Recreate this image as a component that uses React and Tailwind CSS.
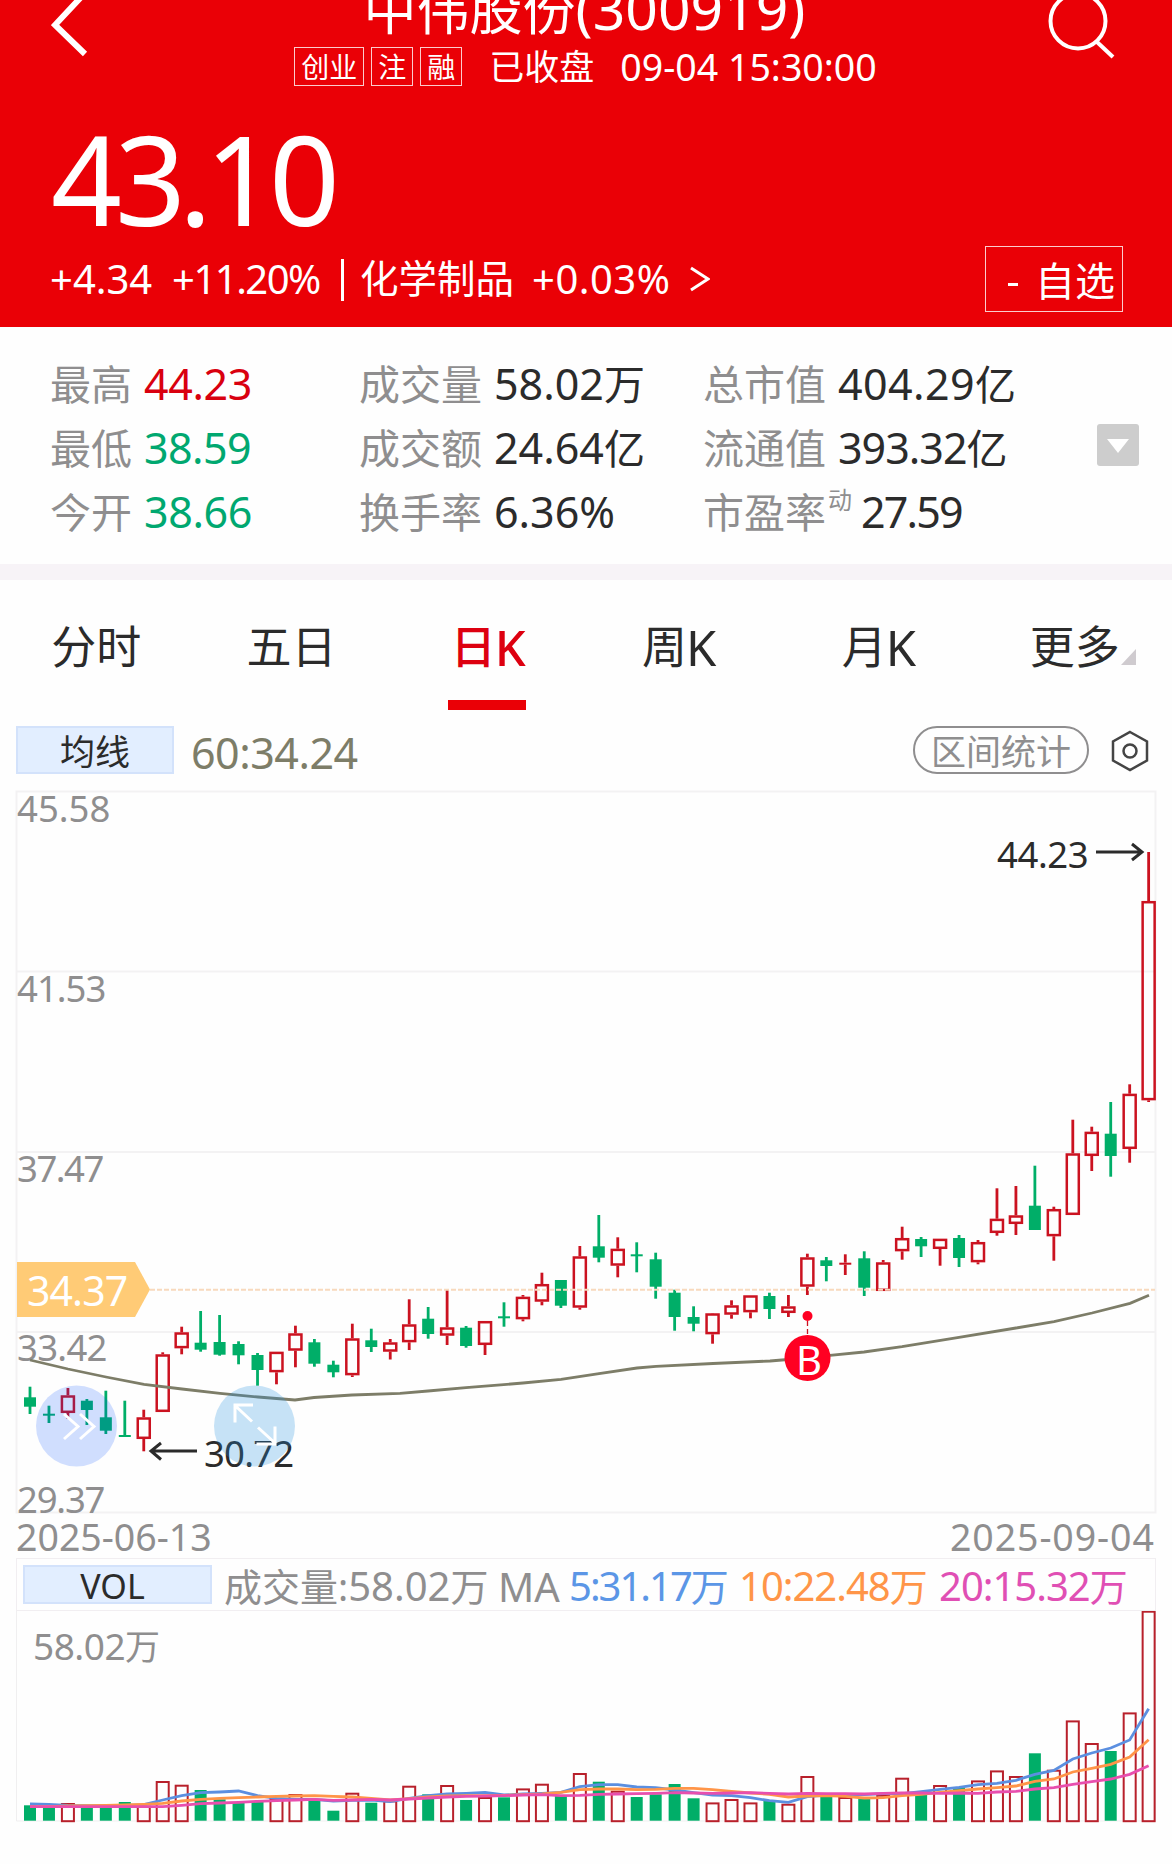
const FONT = "font-['Noto_Sans','Noto_Sans_CJK_SC',sans-serif]";

// [up, high, body top, body bottom, low, volume bar top]
const DAYS = [
  [0, 1386.7, 1397.3, 1406.7, 1414, 1805.3],
  [0, 1405.7, 1413.7, 1415.7, 1423, 1808],
  [1, 1388, 1395.3, 1413, 1419, 1803.3],
  [0, 1399, 1400.7, 1410, 1425, 1806.7],
  [0, 1390.7, 1417.3, 1430.7, 1434, 1805.3],
  [0, 1400.7, 1435, 1437, 1437, 1802],
  [1, 1409.7, 1417.3, 1439, 1451.3, 1806],
  [1, 1352.3, 1354.3, 1412, 1412, 1781.3],
  [1, 1326.7, 1332.3, 1348.3, 1354.3, 1785],
  [0, 1311, 1342.7, 1349.7, 1351.7, 1790],
  [0, 1315, 1342, 1354.7, 1355.7, 1799.3],
  [0, 1341.3, 1344, 1355.3, 1364.3, 1802.7],
  [0, 1353, 1355, 1370, 1385.7, 1802],
  [1, 1351.7, 1351.7, 1372.3, 1384.3, 1798.3],
  [1, 1325.7, 1333.3, 1350.7, 1367.3, 1794.3],
  [0, 1339, 1342.3, 1363.7, 1366.7, 1800.7],
  [0, 1360.7, 1364.7, 1372.3, 1377.3, 1810.7],
  [1, 1323.7, 1338.3, 1375.3, 1377, 1793],
  [0, 1328.7, 1340.3, 1347, 1352, 1802.7],
  [1, 1339, 1342.3, 1351.7, 1359.5, 1800.7],
  [1, 1299.3, 1324.3, 1342.3, 1350, 1786],
  [0, 1307, 1318.7, 1334, 1338.7, 1794.3],
  [1, 1290, 1327.3, 1335.7, 1345, 1785.3],
  [0, 1326, 1327.7, 1346, 1347.7, 1800],
  [1, 1321, 1321, 1345, 1355, 1797.3],
  [0, 1302.3, 1316.3, 1318.3, 1326.7, 1797.3],
  [1, 1295, 1296.7, 1319.3, 1321.3, 1788.7],
  [1, 1272.7, 1284, 1301.7, 1305.3, 1784],
  [0, 1280, 1280, 1305.7, 1308, 1796],
  [1, 1246, 1256.3, 1307.7, 1309.7, 1773.3],
  [0, 1215, 1246.3, 1257.7, 1262.3, 1781.7],
  [1, 1237.3, 1248.7, 1265.7, 1277.3, 1791],
  [0, 1242.3, 1254.3, 1256.3, 1272.3, 1797],
  [0, 1252.7, 1259.3, 1286.7, 1298.7, 1794.3],
  [0, 1289.7, 1292.7, 1317, 1330.7, 1784],
  [0, 1306.3, 1317, 1323.7, 1331.3, 1798.3],
  [1, 1313, 1313.3, 1334.3, 1343.7, 1802.7],
  [1, 1300.3, 1305.3, 1314.7, 1318.7, 1799.3],
  [1, 1295.3, 1295.3, 1312.3, 1318.3, 1802.7],
  [0, 1292.7, 1296, 1309, 1319, 1801],
  [1, 1295, 1306.3, 1313, 1317, 1804],
  [1, 1253.7, 1257.3, 1286.7, 1295, 1776.3],
  [0, 1257, 1260.3, 1266, 1281.3, 1797],
  [1, 1254.3, 1262.7, 1264.7, 1275, 1797.3],
  [0, 1251.3, 1258.3, 1287.7, 1296, 1798],
  [1, 1260, 1262.3, 1291, 1291, 1795],
  [1, 1226.7, 1238, 1251.3, 1259.7, 1778],
  [0, 1237, 1239, 1246.3, 1257, 1794.3],
  [1, 1238.7, 1238.7, 1249, 1265.7, 1785.3],
  [0, 1235, 1238, 1258, 1267, 1787.7],
  [1, 1240, 1242, 1262.3, 1264.3, 1780.7],
  [1, 1188.3, 1218.7, 1233, 1235.7, 1770.7],
  [1, 1186, 1215.3, 1224, 1235, 1776.3],
  [0, 1165.7, 1205.7, 1230, 1230, 1753.3],
  [1, 1206.7, 1209, 1236.3, 1260.7, 1770],
  [1, 1119.7, 1153.3, 1215, 1215, 1720.7],
  [1, 1126.7, 1131.7, 1156, 1171, 1743.3],
  [0, 1102, 1133.7, 1156, 1176.7, 1751],
  [1, 1084.3, 1093.7, 1149, 1162.7, 1712.7],
  [1, 852, 901, 1100.3, 1102, 1611],
];

const MA60 =
  '30,1360 68,1369 106,1377 144,1384.3 182,1389 220,1393.3 258,1397 295,1400 314,1397.5 352,1395 400,1393.3 428,1391 466,1387.7 523,1383 561,1379.3 599,1373.7 637,1368 656,1366.3 713,1363.5 770,1361 788,1359.5 830,1355.3 864,1352 902,1346.7 959,1337.3 1016,1328 1054,1321.7 1092,1313 1130,1303.3 1149,1295.3';

// volume averages, in thirds of a pixel below y = 1550
const VOL_MA = [
  ['#5b8fe0', [762, 763, 766, 767, 768, 766, 764, 750, 737, 728, 726, 723, 737, 745, 748, 748, 753, 751, 750, 755, 745, 737, 732, 730, 727, 735, 732, 730, 727, 710, 704, 704, 711, 713, 720, 728, 735, 737, 743, 752, 757, 740, 735, 733, 734, 731, 731, 725, 718, 712, 704, 700, 691, 673, 661, 627, 609, 594, 570, 476]],
  ['#ff9548', [770, 770, 768, 767, 766, 765, 763, 760, 753, 748, 745, 743, 741, 739, 738, 737, 739, 741, 745, 750, 746, 741, 738, 737, 737, 736, 734, 732, 727, 719, 717, 717, 719, 718, 715, 715, 719, 724, 729, 733, 741, 738, 737, 739, 744, 743, 737, 733, 727, 722, 717, 713, 708, 694, 687, 666, 655, 643, 621, 569]],
  ['#e84fae', [770, 770, 770, 770, 770, 770, 770, 770, 766, 761, 759, 757, 754, 752, 750, 748, 751, 750, 748, 750, 747, 744, 741, 739, 738, 737, 735, 734, 737, 736, 733, 732, 731, 730, 728, 729, 730, 729, 728, 730, 732, 730, 731, 731, 732, 730, 729, 729, 730, 729, 730, 726, 724, 717, 713, 703, 695, 687, 673, 647]],
];

const dayX = (i) => 30 + i * 18.96;

const STATS = [
  [
    { label: '最高', value: '44.23', color: 'text-[#d9000f]', spacing: 'tracking-[-0.4px]' },
    { label: '最低', value: '38.59', color: 'text-[#00a870]', spacing: 'tracking-[-0.6px]' },
    { label: '今开', value: '38.66', color: 'text-[#00a870]', spacing: 'tracking-[-0.4px]' },
  ],
  [
    { label: '成交量', value: '58.02', unit: '万' },
    { label: '成交额', value: '24.64', unit: '亿' },
    { label: '换手率', value: '6.36%' },
  ],
  [
    { label: '总市值', value: '404.29', unit: '亿', spacing: 'tracking-[0.4px]' },
    { label: '流通值', value: '393.32', unit: '亿', spacing: 'tracking-[-1px]' },
    { label: '市盈率', sup: '动', value: '27.59', spacing: 'tracking-[-1.8px]' },
  ],
];

const TABS = ['分时', '五日', '日K', '周K', '月K', '更多'];

function Badge({ children }) {
  return (
    <span className="flex h-[39px] items-center border border-white/80 px-[6px] text-[28px] leading-none">
      {children}
    </span>
  );
}

function Header() {
  return (
    <header className="h-[327px] overflow-hidden bg-[#ea0006] text-white">
      <div className="flex h-[92px] items-start justify-between pl-[51px] pr-[54px]">
        <svg className="h-[60px] w-[70px]" viewBox="0 0 70 60" fill="none" stroke="currentColor" strokeWidth="6">
          <path d="M33 -6 L4 25 L34 54" />
        </svg>
        <div className="flex flex-col items-center">
          <h1 className="-mt-[28px] whitespace-nowrap text-[53px] leading-[72px]">
            中伟股份<span className="text-[57px]">(300919)</span>
          </h1>
          <div className="ml-[2px] mt-px flex items-center gap-[7px]">
            <Badge>创业</Badge>
            <Badge>注</Badge>
            <Badge>融</Badge>
            <span className="ml-[20px] whitespace-nowrap text-[35px] leading-[39px]">已收盘</span>
            <span className="ml-[19px] whitespace-nowrap text-[37.5px] leading-[37px]">09-04 15:30:00</span>
          </div>
        </div>
        <svg className="h-[60px] w-[70px]" viewBox="0 0 70 60" fill="none" stroke="currentColor" strokeWidth="4">
          <circle cx="30" cy="21" r="27.5" />
          <path d="M49 42 L65 57" />
        </svg>
      </div>

      <div className="mt-[16px] h-[140px] pl-[51px] text-[124px] leading-[140px] tracking-[-7px]">43.10</div>

      <div className="-mt-[2px] flex h-[66px] items-center pl-[50px] pr-[49px] text-[40px]">
        <span className="w-[122px] leading-[66px]">+4.34</span>
        <span className="w-[169px] tracking-[-1.5px]">+11.20%</span>
        <span className="mt-[2px] h-[42px] w-[3px] bg-white" />
        <span className="ml-[16px] w-[172px] whitespace-nowrap text-[38.5px]">化学制品</span>
        <span className="w-[158px] tracking-[0.5px]">+0.03%</span>
        <svg className="h-[26px] w-[20px]" viewBox="0 0 20 26" fill="none" stroke="currentColor" strokeWidth="3">
          <path d="M1 2 L18 13 L1 24" />
        </svg>
        <span className="ml-auto flex h-[66px] w-[138px] items-center justify-between border border-white/80 pl-[22px] pr-[7px]">
          <span className="mt-[10px] h-[3px] w-[10px] bg-white" />
          <span className="mt-[4px] text-[40px] leading-none">自选</span>
        </span>
      </div>
    </header>
  );
}

function Stat({ label, sup, value, unit, color = 'text-[#2b2b2b]', spacing = '' }) {
  return (
    <div className="flex h-[64px] items-center whitespace-nowrap text-[41px] leading-[64px]">
      <span className="text-[#8f8e8f]">{label}</span>
      {sup && <span className="ml-[2px] -mt-[24px] text-[24px] text-[#8f8e8f]">{sup}</span>}
      <span className={`text-[43px] ${sup ? 'ml-[9px]' : 'ml-[12px]'} ${color} ${spacing}`}>{value}</span>
      <span className={color}>{unit}</span>
    </div>
  );
}

function Stats() {
  return (
    <section className="flex h-[237px] pl-[50px] pt-[25px]">
      {STATS.map((col, i) => (
        <div key={i} className={i === 0 ? 'w-[309px]' : i === 1 ? 'w-[344px]' : 'w-[394px]'}>
          {col.map((s) => (
            <Stat key={s.label} {...s} />
          ))}
        </div>
      ))}
      <div className="mt-[72px] flex h-[42px] w-[42px] items-center justify-center rounded-[3px] bg-[#cdcdcd]">
        <svg className="mt-[2px] h-[14px] w-[22px]" viewBox="0 0 22 14" fill="#fff">
          <path d="M0 0 H22 L11 14 Z" />
        </svg>
      </div>
    </section>
  );
}

function Tabs() {
  return (
    <nav className="grid h-[146px] grid-cols-6 border-t-[16px] border-[#f7f3f7] text-[45px] text-[#2b2b2b]">
      {TABS.map((tab) => (
        <div
          key={tab}
          className={`flex flex-col items-center ${tab === '日K' ? 'font-medium text-[#dd0010]' : ''}`}
        >
          <span className={`mt-[34px] flex items-end leading-[66px] ${tab === '周K' ? '-ml-[9px]' : tab === '分时' || tab === '五日' ? '-ml-[3px]' : ''}`}>
            {tab.endsWith('K') ? (
              <>
                {tab[0]}
                <span className="-ml-px text-[49px]">K</span>
              </>
            ) : (
              <span className={tab === '更多' ? 'ml-[17px]' : ''}>{tab}</span>
            )}
            {tab === '更多' && (
              <svg className="mb-[15px] ml-px h-[16px] w-[15px]" viewBox="0 0 15 16" fill="#cfcbcf">
                <path d="M15 0 V16 H0 Z" />
              </svg>
            )}
          </span>
          {tab === '日K' && <span className="-ml-[2px] mt-[20px] h-[10px] w-[78px] bg-[#ea0006]" />}
        </div>
      ))}
    </nav>
  );
}

function Toolbar() {
  return (
    <div className="flex h-[48px] items-center pl-[16px] pr-[22px]">
      <span className="flex h-[48px] w-[158px] items-center justify-center border-2 border-[#d3e2fb] bg-[#e2eeff] pt-[3px] text-[35px] leading-none text-[#2b2b2b]">
        均线
      </span>
      <span className="ml-[17px] mt-[6px] text-[43px] leading-[48px] tracking-[-0.5px] text-[#7d7d68]">60:34.24</span>
      <span className="ml-auto flex h-[48px] w-[176px] items-center justify-center rounded-full border-2 border-[#8f8e8f] pt-[3px] text-[35px] leading-none text-[#8f8e8f]">
        区间统计
      </span>
      <svg className="ml-[21px] mt-[2px] h-[44px] w-[40px]" viewBox="0 0 40 44" fill="none" stroke="#444" strokeWidth="2.5">
        <path d="M20 3 L37 12.5 V31.5 L20 41 L3 31.5 V12.5 Z" />
        <circle cx="20" cy="22" r="6.5" />
      </svg>
    </div>
  );
}

function Candle({ x, day }) {
  const [up, high, top, bottom, low] = day;
  const height = bottom - top;
  const color = up ? '#cb1220' : '#00ae68';
  return (
    <g fill={color}>
      <rect x={x - 1.4} y={high} width="2.8" height={up ? top - high : low - high} />
      {up ? <rect x={x - 1.4} y={bottom} width="2.8" height={low - bottom} /> : null}
      {up && height > 3 ? (
        <rect x={x - 6} y={top + 1.2} width="12" height={height - 2.4} fill="none" stroke={color} strokeWidth="2.5" />
      ) : (
        <rect x={x - 6} y={top} width="12" height={height} />
      )}
    </g>
  );
}

function KLine() {
  return (
    <svg className="block h-[783px] w-[1172px]" viewBox="0 774 1172 783" fill="none">
      <g stroke="#f3f2f3" strokeWidth="2">
        <rect x="16.5" y="791.5" width="1139" height="721" />
        <path d="M16 971.5 H1155 M16 1152 H1155 M16 1332 H1155" />
      </g>
      <g fill="#8f8e8f" fontSize="36.5">
        <text x="17" y="821.5">45.58</text>
        <text x="17" y="1001.5" letterSpacing="-1">41.53</text>
        <text x="17" y="1181.5" letterSpacing="-1.5">37.47</text>
        <text x="17" y="1360.5" letterSpacing="-0.7">33.42</text>
        <text x="17" y="1512.5" letterSpacing="-1.2">29.37</text>
        <text x="16" y="1551" fontSize="37.5">2025-06-13</text>
        <text x="950" y="1551" fontSize="37.5" letterSpacing="0.9">2025-09-04</text>
      </g>

      {DAYS.map((day, i) => (
        <Candle key={i} x={dayX(i)} day={day} />
      ))}
      <polyline points={MA60} stroke="#7d7d68" strokeWidth="2.8" />
      <path d="M150 1289.7 H1155" stroke="#f8d9bd" strokeWidth="2" strokeDasharray="5 2" />

      <path d="M17 1262 H135 L150 1289.5 L135 1317 H17 Z" fill="#ffcb76" />
      <text x="27" y="1306" fontSize="41" letterSpacing="-0.9" fill="#fff">34.37</text>

      <g stroke="#2b2b2b" strokeWidth="3">
        <path d="M1096 852 H1142 M1132 844 L1142 852 L1132 860" />
        <path d="M197 1451 H151 M161 1443 L151 1451 L161 1459.5" />
      </g>
      <g fill="#2b2b2b" fontSize="36.5">
        <text x="997" y="867.5" letterSpacing="-0.4">44.23</text>
        <text x="204" y="1467" letterSpacing="-0.8">30.72</text>
      </g>

      {/* floating buttons */}
      <circle cx="76.5" cy="1426" r="40.5" fill="#0050ff" fillOpacity="0.18" />
      <path d="M64 1414 L78 1426.5 L64 1439 M80 1414 L94 1426.5 L80 1439" stroke="#fff" strokeWidth="3" />
      <circle cx="254.5" cy="1426" r="40.5" fill="#2090e0" fillOpacity="0.25" />
      <path
        d="M252 1421.5 L234.5 1405 M235 1422.5 V1405 H253 M258 1427.5 L275.5 1443.5 M275 1426.5 V1444 H256.5"
        stroke="#fff"
        strokeWidth="3"
      />

      {/* buy marker */}
      <circle cx="807.5" cy="1316" r="5" fill="#ff0022" />
      <path d="M807.5 1321 V1336" stroke="#cb1220" strokeWidth="1.3" strokeDasharray="5 3" />
      <circle cx="807.5" cy="1358" r="23" fill="#ff0022" />
      <text x="809" y="1374.5" fontSize="40" textAnchor="middle" fill="#fff">B</text>
    </svg>
  );
}

function VolumeBar() {
  return (
    <div className="mx-[16px] mt-px flex h-[53px] w-[1140px] items-center whitespace-nowrap border border-[#f1eef1] pl-[6px] text-[38px] leading-[53px] text-[#8f8e8f]">
      <span className="mr-[12px] flex h-[39px] w-[189px] items-center justify-center border-2 border-[#d3e2fb] bg-[#e2eeff] pr-[10px] pt-[3px] text-[34px] leading-none text-[#2b2b2b]">
        VOL
      </span>
      <span className="w-[274px] pt-[3px]">
        成交量:<span className="text-[40px]">58.02</span>万
      </span>
      <span className="w-[71px] pt-[3px] text-[40px]">MA</span>
      <span className="w-[170px] pt-[3px] text-[#5b96e6]">
        <span className="text-[40px] tracking-[-2px]">5:31.17</span>万
      </span>
      <span className="w-[200px] pt-[3px] text-[#ff9548]">
        <span className="text-[40px] tracking-[-1px]">10:22.48</span>万
      </span>
      <span className="pt-[3px] text-[#e04fb4]">
        <span className="text-[40px] tracking-[-1px]">20:15.32</span>万
      </span>
    </div>
  );
}

function Volume() {
  return (
    <svg className="block h-[253px] w-[1172px]" viewBox="0 1611 1172 253" fill="none">
      <path d="M16.5 1610 V1821 H1155.5 V1610" stroke="#f0eff0" />
      <text x="33" y="1660" fontSize="37" letterSpacing="-0.5" fill="#8f8e8f">
        58.02<tspan fontSize="35">万</tspan>
      </text>
      {DAYS.map((day, i) =>
        day[0] ? (
          <rect key={i} x={dayX(i) - 6} y={day[5] + 0.7} width="12" height={1820.5 - day[5]} stroke="#b8202b" strokeWidth="2" />
        ) : (
          <rect key={i} x={dayX(i) - 6} y={day[5]} width="12" height={1820.7 - day[5]} fill="#00ae68" />
        ),
      )}
      {VOL_MA.map(([color, line]) => (
        <polyline
          key={color}
          points={line.map((v, i) => `${dayX(i)},${1550 + v / 3}`).join(' ')}
          stroke={color}
          strokeWidth="2.8"
        />
      ))}
    </svg>
  );
}

export default function App() {
  return (
    <main className={`h-[1864px] w-[1172px] overflow-hidden bg-[#fefefe] ${FONT}`}>
      <Header />
      <Stats />
      <Tabs />
      <div className="h-[16px]" />
      <Toolbar />
      <KLine />
      <VolumeBar />
      <Volume />
    </main>
  );
}
